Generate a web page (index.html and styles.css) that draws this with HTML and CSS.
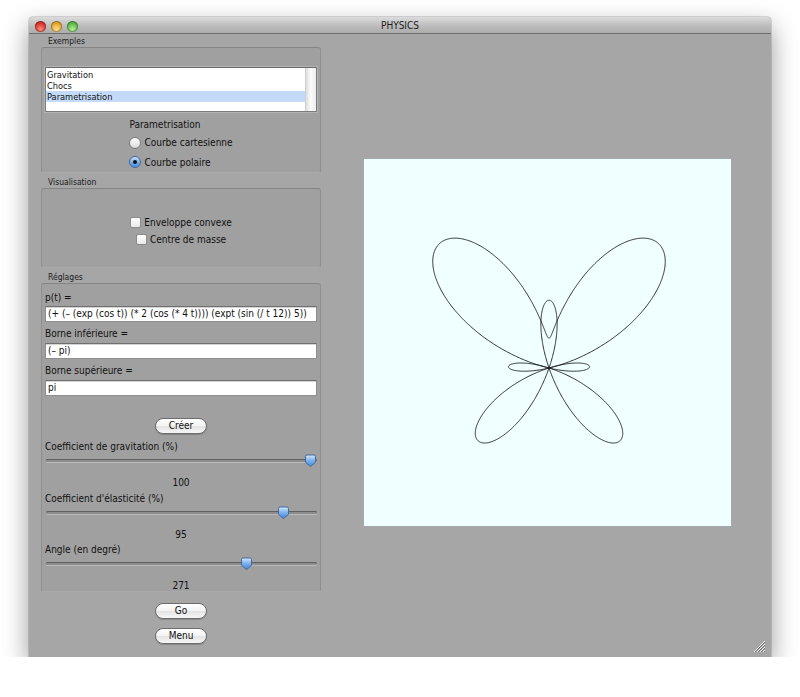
FILE: index.html
```html
<!DOCTYPE html>
<html lang="fr">
<head>
<meta charset="utf-8">
<title>PHYSICS</title>
<link rel="stylesheet" href="styles.css">
</head>
<body>
<div class="window">
  <div class="titlebar">
    <div class="lights">
      <span class="light red"></span><span class="light yellow"></span><span class="light green"></span>
    </div>
    <div class="title">PHYSICS</div>
    <div></div>
  </div>
  <div class="content">
    <div class="sidebar">
      <div class="legend">Exemples</div>
      <div class="group group-examples">
        <div class="list">
          <div class="list-items">
            <div class="item">Gravitation</div>
            <div class="item">Chocs</div>
            <div class="item selected">Parametrisation</div>
          </div>
          <div class="scrolltrack"></div>
        </div>
        <div class="param">
          <div class="param-title">Parametrisation</div>
          <div class="choice"><span class="radio"></span>Courbe cartesienne</div>
          <div class="choice"><span class="radio on"></span>Courbe polaire</div>
        </div>
      </div>

      <div class="legend">Visualisation</div>
      <div class="group group-visu">
        <div class="checkrow"><span class="check"></span>Enveloppe convexe</div>
        <div class="checkrow"><span class="check"></span>Centre de masse</div>
      </div>

      <div class="legend">Réglages</div>
      <div class="group group-settings">
        <div class="field-label first">p(t) =</div>
        <div class="field field-first">(+ (– (exp (cos t)) (* 2 (cos (* 4 t)))) (expt (sin (/ t 12)) 5))</div>
        <div class="field-label">Borne inférieure =</div>
        <div class="field">(– pi)</div>
        <div class="field-label">Borne supérieure =</div>
        <div class="field">pi</div>
        <button class="btn btn-create">Créer</button>

        <div class="slider-label first">Coefficient de gravitation (%)</div>
        <div class="slider"><div class="track"></div><svg class="thumb" style="left:258px" width="13" height="14" viewBox="0 0 13 14"><defs><linearGradient id="tg1" x1="0" y1="0" x2="0" y2="1"><stop offset="0" stop-color="#d9eafc"/><stop offset="0.45" stop-color="#7fb3ee"/><stop offset="1" stop-color="#3f86dc"/></linearGradient></defs><path d="M1.5 2.5 Q1.5 1 3 1 H10 Q11.5 1 11.5 2.5 V8.3 L6.5 12.6 L1.5 8.3 Z" fill="url(#tg1)" stroke="#45689a" stroke-width="1"/></svg></div>
        <div class="slider-value">100</div>

        <div class="slider-label">Coefficient d'élasticité (%)</div>
        <div class="slider"><div class="track"></div><svg class="thumb" style="left:231px" width="13" height="14" viewBox="0 0 13 14"><path d="M1.5 2.5 Q1.5 1 3 1 H10 Q11.5 1 11.5 2.5 V8.3 L6.5 12.6 L1.5 8.3 Z" fill="url(#tg1)" stroke="#45689a" stroke-width="1"/></svg></div>
        <div class="slider-value">95</div>

        <div class="slider-label">Angle (en degré)</div>
        <div class="slider"><div class="track"></div><svg class="thumb" style="left:194px" width="13" height="14" viewBox="0 0 13 14"><path d="M1.5 2.5 Q1.5 1 3 1 H10 Q11.5 1 11.5 2.5 V8.3 L6.5 12.6 L1.5 8.3 Z" fill="url(#tg1)" stroke="#45689a" stroke-width="1"/></svg></div>
        <div class="slider-value">271</div>
      </div>

      <div class="actions">
        <button class="btn btn-go">Go</button>
        <button class="btn btn-menu">Menu</button>
      </div>
    </div>

    <div class="stage">
      <svg id="plot" width="367" height="367" viewBox="0 0 367 367">
        <polyline id="curve" fill="none" stroke="#1a1a1a" stroke-width="0.9" points=""/>
      </svg>
    </div>
  </div>
  <svg class="grip" width="13" height="13" viewBox="0 0 13 13">
    <path d="M12 1 L1 12 M12 4 L4 12 M12 7 L7 12 M12 10 L10 12" stroke="#f4f4f4" stroke-width="1"/>
    <path d="M12 2 L2 12 M12 5 L5 12 M12 8 L8 12 M12 11 L11 12" stroke="#6e6e6e" stroke-width="1"/>
  </svg>
</div>
<script src="app.js"></script>
</body>
</html>
```

FILE: styles.css
```css
* { box-sizing: border-box; }
html, body { margin: 0; padding: 0; }
body {
  background: #ffffff;
  font-family: "DejaVu Sans Condensed", "DejaVu Sans", sans-serif;
  font-stretch: condensed;
  font-size: 10px;
  color: #111111;
}

.window {
  position: relative;
  margin: 17px 0 0 29px;
  width: 742px;
  height: 640px;
  background: #a6a6a6;
  border-radius: 4px 4px 0 0;
  box-shadow: 0 10px 26px rgba(0,0,0,0.42), 0 0 0 1px rgba(0,0,0,0.12);
}

.titlebar {
  height: 17px;
  display: grid;
  grid-template-columns: 1fr auto 1fr;
  align-items: center;
  background: linear-gradient(#dcdcdc, #bababa 60%, #adadad);
  border-bottom: 1px solid #6c6c6c;
  border-radius: 4px 4px 0 0;
}
.lights { display: flex; gap: 5px; padding: 2px 0 0 6px; }
.light {
  width: 11px; height: 11px; border-radius: 50%;
  box-shadow: inset 0 0 0 1px rgba(0,0,0,0.28);
}
.light.red { background: radial-gradient(circle at 50% 75%, #ff8a80, #d8332b 60%, #a51c18); }
.light.yellow { background: radial-gradient(circle at 50% 75%, #ffe08a, #e2a52e 60%, #b77514); }
.light.green { background: radial-gradient(circle at 50% 75%, #b6f09a, #5cb845 60%, #2f8a24); }
.title { font-size: 10px; line-height: 16px; color: #1c1c1c; padding-top: 1px; }

.content { display: flex; align-items: flex-start; }

.sidebar { width: 280px; margin-left: 12px; }

.legend {
  height: 12px;
  line-height: 12px;
  font-size: 8.5px;
  padding-left: 7px;
  margin-top: 3px;
  color: #1a1a1a;
}
.legend:first-child { margin-top: 1px; }

.group {
  border: 1px solid #8f8f8f;
  border-top-color: #858585;
  border-bottom-color: #a9a9a9;
  border-radius: 3px;
  background: #a0a0a0;
  padding: 0 3px;
}
.group-examples { height: 126px; padding-top: 19px; }
.group-visu {
  height: 80px;
  padding-top: 25px;
  display: flex;
  flex-direction: column;
  align-items: center;
}
.group-settings { height: 309px; }

/* list */
.list {
  height: 45px;
  display: flex;
  background: #ffffff;
  border: 1px solid #7c7c7c;
  border-top-color: #6a6a6a;
  box-shadow: 0 0 0 1px #b3b3b3;
}
.list-items { flex: 1; padding-top: 0.5px; }
.item {
  height: 11px;
  line-height: 11px;
  font-size: 9.2px;
  padding-left: 1px;
  color: #111;
}
.item.selected { background: #c3dbf8; }
.scrolltrack {
  width: 11px;
  background: linear-gradient(90deg, #dedede, #fbfbfb 45%, #ececec);
  border-left: 1px solid #cfcfcf;
}

.param { width: max-content; margin: 6px auto 0; }
.param-title { line-height: 14px; margin-bottom: 1px; }
.choice { display: flex; align-items: center; height: 19.5px; }
.radio {
  position: relative;
  width: 12px; height: 12px;
  border-radius: 50%;
  border: 1px solid #7a7a7a;
  background: linear-gradient(#ffffff, #ececec 55%, #d9d9d9);
  margin-right: 3px;
}
.radio.on {
  border-color: #44679a;
  background: linear-gradient(#cfe3fb, #7ab0ee 50%, #4a8ee0);
}
.radio.on::after {
  content: "";
  position: absolute;
  left: 3px; top: 3px;
  width: 4px; height: 4px;
  border-radius: 50%;
  background: #111;
}

.checkrow { display: flex; align-items: center; height: 17px; }
.check {
  width: 11px; height: 11px;
  border: 1px solid #8a8a8a;
  border-radius: 2px;
  background: linear-gradient(#ffffff, #e9e9e9);
  margin-right: 3px;
}

/* settings */
.field-label { line-height: 14px; margin-top: 5px; }
.field-label.first { margin-top: 7px; }
.field {
  height: 16px;
  margin-top: 2px;
  background: #ffffff;
  border: 1px solid #8e8e8e;
  border-top-color: #6f6f6f;
  box-shadow: inset 0 1px 0 #d4d4d4;
  line-height: 14px;
  padding-left: 2px;
  white-space: nowrap;
  overflow: hidden;
  color: #111;
}
.field-first { margin-top: 1px; }

.btn {
  display: block;
  width: 52px;
  height: 16px;
  padding: 0;
  border-radius: 8px;
  border: 1px solid #6c6c6c;
  background: linear-gradient(#ffffff, #f3f3f3 48%, #e3e3e3 52%, #f7f7f7);
  box-shadow: 0 1px 1px rgba(0,0,0,0.18);
  font-family: inherit;
  font-stretch: condensed;
  font-size: 10px;
  line-height: 14px;
  color: #111;
}
.btn-create { margin: 22px auto 0; }

.slider-label { line-height: 14px; margin-top: 1.5px; }
.slider-label.first { margin-top: 6px; }
.slider { position: relative; height: 14px; margin-left: 1px; padding-top: 5px; }
.track {
  height: 3px;
  border-radius: 2px;
  background: #8d8d8d;
  box-shadow: inset 0 1px 0 #5f5f5f, 0 1px 0 #b9b9b9;
}
.thumb { position: absolute; top: 0; }
.slider-value { line-height: 14px; margin-top: 8px; text-align: center; }

.actions { display: flex; flex-direction: column; align-items: center; }
.btn-go { margin-top: 11px; }
.btn-menu { margin-top: 9px; }

.stage {
  margin: 124px 0 0 42px;
  width: 369px;
  height: 369px;
  background: #f0ffff;
  border: 1px solid #a3a9a9;
}
#plot { display: block; }

.grip { position: absolute; right: 5px; bottom: 4px; }
```

FILE: app.js
```js
(function () {
  var OX = 185, OY = 209, SX = 40, SY = 41.5;
  var pts = [];
  var N = 1600;
  for (var i = 0; i <= N; i++) {
    var t = -Math.PI + 2 * Math.PI * i / N;
    var r = Math.exp(Math.cos(t)) - 2 * Math.cos(4 * t) + Math.pow(Math.sin(t / 12), 5);
    var x = r * Math.sin(t);
    var y = r * Math.cos(t);
    pts.push((OX + x * SX).toFixed(2) + ',' + (OY - y * SY).toFixed(2));
  }
  document.getElementById('curve').setAttribute('points', pts.join(' '));
})();
```
